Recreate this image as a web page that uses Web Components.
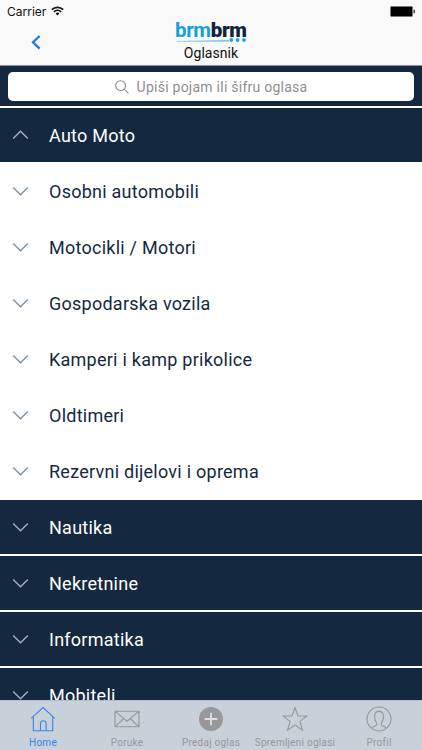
<!DOCTYPE html>
<html lang="hr">
<head>
<meta charset="utf-8">
<meta name="viewport" content="width=device-width, initial-scale=1">
<title>Oglasnik</title>
<style>
  html, body {
    margin: 0;
    height: 100%;
    overflow: hidden;
  }

  body {
    background: #fff;
    font-family: Roboto, "Liberation Sans", sans-serif;
  }
</style>
</head>
<body>
<brm-app>
  <brm-header slot="top" name="Oglasnik" time="10:42 PM"></brm-header>
  <brm-search slot="top" placeholder="Upiši pojam ili šifru oglasa"></brm-search>

  <brm-category name="Auto Moto" open>
    <brm-item>Osobni automobili</brm-item>
    <brm-item>Motocikli / Motori</brm-item>
    <brm-item>Gospodarska vozila</brm-item>
    <brm-item>Kamperi i kamp prikolice</brm-item>
    <brm-item>Oldtimeri</brm-item>
    <brm-item>Rezervni dijelovi i oprema</brm-item>
  </brm-category>
  <brm-category name="Nautika"></brm-category>
  <brm-category name="Nekretnine"></brm-category>
  <brm-category name="Informatika"></brm-category>
  <brm-category name="Mobiteli"></brm-category>

  <brm-tabbar slot="bottom">
    <brm-tab icon="home" active>Home</brm-tab>
    <brm-tab icon="mail">Poruke</brm-tab>
    <brm-tab icon="plus">Predaj oglas</brm-tab>
    <brm-tab icon="star">Spremljeni oglasi</brm-tab>
    <brm-tab icon="user">Profil</brm-tab>
  </brm-tabbar>
</brm-app>

<script>
/**
 * Shared base, renders the static template of the class in an open shadow root.
 */
class BrmElement extends HTMLElement {
  constructor() {
    super();
    this.attachShadow({ mode: 'open' });
    this.shadowRoot.innerHTML = this.constructor.template;
  }

  $(selector) {
    return this.shadowRoot.querySelector(selector);
  }
}

class BrmApp extends BrmElement {
  static template = `
    <style>
      :host {
        display: flex;
        flex-direction: column;
        height: 100vh;
        overflow: hidden;
      }

      main {
        flex: 1;
        min-height: 0;
        overflow: hidden;
      }
    </style>
    <slot name="top"></slot>
    <main><slot></slot></main>
    <slot name="bottom"></slot>
  `;
}

class BrmStatus extends BrmElement {
  static template = `
    <style>
      :host {
        display: grid;
        grid-template-columns: 1fr auto 1fr;
        align-items: center;
        height: 21px;
        box-sizing: border-box;
        padding: 1px 6px 0 7px;
        color: #111;
        font: 12px Inter, sans-serif;
      }

      .left { display: flex; align-items: center; gap: 5px; }
      .time { font-weight: 600; font-size: 12px; letter-spacing: .2px; }
      .battery { justify-self: end; }
      svg { display: block; }
    </style>
    <div class="left">
      <span>Carrier</span>
      <svg width="13" height="10" viewBox="0 0 13 10" fill="none" stroke="#111" stroke-width="1.7">
        <path d="M.8 3.6a8.2 8.2 0 0 1 11.4 0M2.9 5.9a5.2 5.2 0 0 1 7.2 0"/>
        <path d="M6.5 9.6 4.6 7.5a2.8 2.8 0 0 1 3.8 0z" fill="#111" stroke="none"/>
      </svg>
    </div>
    <span class="time"></span>
    <svg class="battery" width="26" height="11" viewBox="0 0 26 11">
      <rect x=".5" y=".5" width="22" height="10" rx="1" fill="#000" stroke="#777"/>
      <path d="M23.5 3.7h1.5v3.6h-1.5z" fill="#444"/>
    </svg>
  `;

  connectedCallback() {
    this.$('.time').textContent = this.getAttribute('time');
  }
}

class BrmLogo extends BrmElement {
  static template = `
    <style>
      :host {
        display: block;
        position: relative;
        width: 72px;
        height: 22px;
        color: #149fdd;
        font: 700 20.5px/18px Roboto, sans-serif;
        letter-spacing: -.35px;
        white-space: nowrap;
      }

      b { color: #12233d; }

      /* road line under the name */
      svg { position: absolute; left: 0; top: 15px; }
    </style>
    <span>brm<b>brm</b></span>
    <svg width="72" height="7" viewBox="0 0 72 7">
      <path d="M2 5 54 4.2v1.2H2z" fill="#4ab2e2"/>
      <g fill="#149fdd" stroke="#f9f9f9" stroke-width=".8">
        <circle cx="56.3" cy="4" r="2.3"/>
        <circle cx="62.6" cy="4" r="2.3"/>
        <circle cx="69" cy="4" r="2.3"/>
      </g>
    </svg>
  `;
}

class BrmHeader extends BrmElement {
  static template = `
    <style>
      :host {
        display: block;
        box-sizing: border-box;
        height: 66px;
        background: #f9f9f9;
        border-bottom: 1px solid #8b929b;
      }

      nav {
        display: grid;
        grid-template-columns: 1fr auto 1fr;
        height: 44px;
      }

      .back { padding: 14px 0 0 31px; }
      .back svg { display: block; }

      .title {
        display: flex;
        flex-direction: column;
        align-items: center;
      }

      .name {
        color: #111;
        font-size: 14px;
        line-height: 20px;
        letter-spacing: .05px;
      }
    </style>
    <brm-status></brm-status>
    <nav>
      <div class="back">
        <svg width="10" height="15" viewBox="0 0 10 15" fill="none" stroke="#1478e6" stroke-width="2.2">
          <path d="M8.6 1 2 7.3l6.6 6.3"/>
        </svg>
      </div>
      <div class="title">
        <brm-logo></brm-logo>
        <span class="name"></span>
      </div>
    </nav>
  `;

  connectedCallback() {
    this.$('brm-status').setAttribute('time', this.getAttribute('time'));
    this.$('.name').textContent = this.getAttribute('name');
  }
}

class BrmSearch extends BrmElement {
  static template = `
    <style>
      :host {
        display: block;
        box-sizing: border-box;
        height: 40px;
        padding: 6px 8px 5px;
        background: #14293f;
      }

      .field {
        display: flex;
        align-items: center;
        justify-content: center;
        gap: 8px;
        height: 29px;
        border-radius: 5px;
        background: #fff;
        color: #8e8e93;
        font-size: 14px;
        letter-spacing: .25px;
      }
    </style>
    <div class="field">
      <svg width="14" height="14" viewBox="0 0 14 14" fill="none" stroke="#8e8e93" stroke-width="1.1">
        <circle cx="5.6" cy="5.6" r="4.9"/>
        <path d="m9.2 9.2 4.2 4.2"/>
      </svg>
      <span></span>
    </div>
  `;

  connectedCallback() {
    this.$('span').textContent = this.getAttribute('placeholder');
  }
}

class BrmChevron extends BrmElement {
  static template = `
    <style>
      :host { display: block; width: 17px; height: 10px; }
      :host([up]) { transform: scaleY(-1); }
      svg { display: block; }
    </style>
    <svg width="17" height="10" viewBox="0 0 17 10" fill="none" stroke="currentColor" stroke-width="1.4">
      <path d="m1.2 1.500 7.3 7.2 7.300-7.200"/>
    </svg>
  `;
}

class BrmItem extends BrmElement {
  static template = `
    <style>
      :host {
        display: flex;
        align-items: center;
        gap: 20px;
        box-sizing: border-box;
        height: 56px;
        padding: 2px 12px 0;
        color: #14293f;
        font-size: 18px;
        letter-spacing: .25px;
      }

      brm-chevron { color: #7a92aa; }
    </style>
    <brm-chevron></brm-chevron>
    <span><slot></slot></span>
  `;
}

class BrmCategory extends BrmElement {
  static template = `
    <style>
      :host {
        display: block;
        border-top: 2px solid #fff;
      }

      header {
        display: flex;
        align-items: center;
        gap: 20px;
        height: 54px;
        padding: 0 12px;
        background: #14293f;
        color: #fff;
        font-size: 18px;
        letter-spacing: .25px;
        cursor: pointer;
      }

      brm-chevron { color: #a3b0c1; }

      .items { display: none; }
      :host([open]) .items { display: block; }
    </style>
    <header>
      <brm-chevron></brm-chevron>
      <span></span>
    </header>
    <div class="items"><slot></slot></div>
  `;

  static observedAttributes = ['open'];

  connectedCallback() {
    this.$('header span').textContent = this.getAttribute('name');
    this.$('header').addEventListener('click', () => this.toggleAttribute('open'));
  }

  attributeChangedCallback() {
    this.$('brm-chevron').toggleAttribute('up', this.hasAttribute('open'));
  }
}

class BrmTabbar extends BrmElement {
  static template = `
    <style>
      :host {
        display: grid;
        grid-template-columns: repeat(5, 84px);
        justify-content: center;
        box-sizing: border-box;
        height: 50px;
        border-top: 1px solid #b5bdc8;
        background: #c8d0da;
      }
    </style>
    <slot></slot>
  `;
}

const ICONS = {
  home: `<path d="M3.300 10.700v14.100h7.200v-7.300a2.800 2.800 0 0 1 5.600 0v7.300h6.600V10.700M10.500 24.800h5.600M1.200 12.300 13 1.500l11.800 10.800"/>`,
  mail: `<path d="M1 5.2h24v15.6H1zM1 5.2l12 10 12-10M1 20.8l8.7-8.3M25 20.8l-8.7-8.3"/>`,
  plus: `<circle cx="13" cy="13" r="12" fill="currentColor" stroke="none"/><path d="M13 6.7v12.6M6.7 13h12.6" stroke="#dbe1e8" stroke-width="1.8"/>`,
  star: `<path d="m13 1.700 3 8.300h8.900l-7 5.400 2.600 8.800L13 19l-7.500 5.200 2.600-8.800-7-5.400H10z"/>`,
  user: `<circle cx="13" cy="13" r="12"/><path d="M5.500 22.300c.8-1.900 4.200-2 5-3.300.5-.9.1-2.200-.6-3.300-1.100-1.600-1.300-3.300-1.300-5.300 0-3.200 1.600-5 4.400-5s4.400 1.800 4.400 5c0 2-.2 3.700-1.300 5.300-.7 1.100-1.100 2.400-.6 3.300.8 1.300 4.200 1.400 5 3.300"/>`
};

class BrmTab extends BrmElement {
  static template = `
    <style>
      :host {
        display: flex;
        flex-direction: column;
        align-items: center;
        gap: 4px;
        padding-top: 5px;
        color: #96989c;
        font-size: 10px;
        line-height: 14px;
        letter-spacing: .25px;
        white-space: nowrap;
      }

      :host([active]) { color: #3784ea; }
      svg { display: block; }
    </style>
    <svg width="26" height="26" viewBox="0 0 26 26" fill="none" stroke="currentColor" stroke-width="1.1"></svg>
    <span><slot></slot></span>
  `;

  connectedCallback() {
    this.$('svg').innerHTML = ICONS[this.getAttribute('icon')];
  }
}

customElements.define('brm-app', BrmApp);
customElements.define('brm-status', BrmStatus);
customElements.define('brm-logo', BrmLogo);
customElements.define('brm-header', BrmHeader);
customElements.define('brm-search', BrmSearch);
customElements.define('brm-chevron', BrmChevron);
customElements.define('brm-item', BrmItem);
customElements.define('brm-category', BrmCategory);
customElements.define('brm-tabbar', BrmTabbar);
customElements.define('brm-tab', BrmTab);
</script>
</body>
</html>
